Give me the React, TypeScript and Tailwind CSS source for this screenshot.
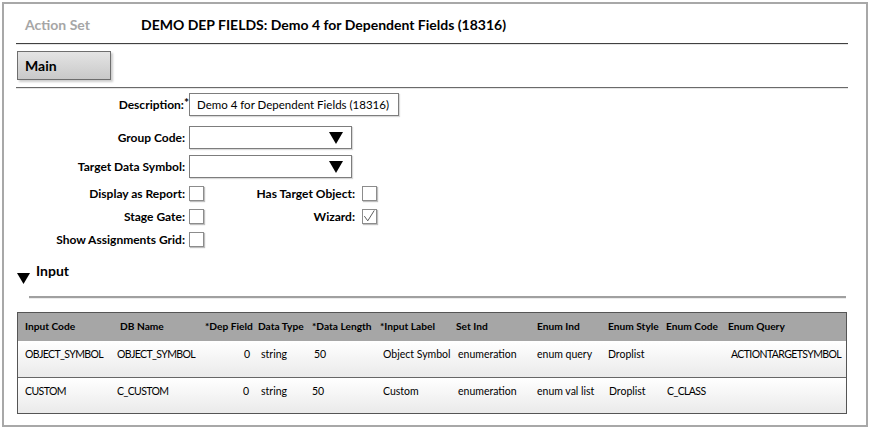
import React from "react";

const font = { fontFamily: "Lato, 'Open Sans', sans-serif" };

function Checkbox({ checked = false }: { checked?: boolean }) {
  return (
    <div className="relative w-[15px] h-[15px] border border-[#8c8c8c] bg-white shadow-[1px_1px_1px_rgba(0,0,0,0.25)]">
      {checked && (
        <svg viewBox="0 0 15 15" className="absolute inset-0 w-[13px] h-[13px]">
          <path d="M1.5 7 L5.5 12.5 L13 0.5" fill="none" stroke="#444" strokeWidth="1" />
        </svg>
      )}
    </div>
  );
}

function Select() {
  return (
    <div className="w-[163px] h-[23px] border border-[#7d7d7d] bg-white shadow-[1px_1px_1px_rgba(0,0,0,0.15)] flex items-center justify-end pr-[8px]">
      <svg width="14" height="12" viewBox="0 0 14 12">
        <polygon points="0,0 14,0 7,12" fill="#000" />
      </svg>
    </div>
  );
}

const cols = [
  { w: 97, h: "Input Code", hp: 7 },
  { w: 88, h: "DB Name", hp: 5 },
  { w: 53, h: "*Dep Field", hp: 2 },
  { w: 53, h: "Data Type", hp: 2 },
  { w: 68, h: "*Data Length", hp: 3 },
  { w: 76, h: "*Input Label", hp: 3 },
  { w: 80, h: "Set Ind", hp: 3 },
  { w: 72, h: "Enum Ind", hp: 4 },
  { w: 58, h: "Enum Style", hp: 3 },
  { w: 62, h: "Enum Code", hp: 3 },
  { w: 121, h: "Enum Query", hp: 3 },
];

type Cell = { t: string; p: number; right?: boolean; caps?: boolean };
const rows: Cell[][] = [
  [
    { t: "OBJECT_SYMBOL", p: 7, caps: true },
    { t: "OBJECT_SYMBOL", p: 2, caps: true },
    { t: "0", p: 6, right: true },
    { t: "string", p: 5 },
    { t: "50", p: 5 },
    { t: "Object Symbol", p: 6 },
    { t: "enumeration", p: 5 },
    { t: "enum query", p: 4 },
    { t: "Droplist", p: 3 },
    { t: "", p: 4 },
    { t: "ACTIONTARGETSYMBOL", p: 6, caps: true },
  ],
  [
    { t: "CUSTOM", p: 7, caps: true },
    { t: "C_CUSTOM", p: 2, caps: true },
    { t: "0", p: 7, right: true },
    { t: "string", p: 5 },
    { t: "50", p: 3 },
    { t: "Custom", p: 6 },
    { t: "enumeration", p: 5 },
    { t: "enum val list", p: 4 },
    { t: "Droplist", p: 4 },
    { t: "C_CLASS", p: 4, caps: true },
    { t: "", p: 6 },
  ],
];

export default function App() {
  return (
    <div className="w-[870px] h-[429px] bg-white p-[2px] text-black" style={font}>
      <div className="w-full h-[425px] border-2 border-[#a8a8a8]">
        {/* Header */}
        <div className="h-[39px] flex items-center pl-[21px] pt-[2px]">
          <div className="w-[116px] text-[14px] font-bold text-[#a6a6a6]">Action Set</div>
          <div className="text-[14px] font-bold">DEMO DEP FIELDS: Demo 4 for Dependent Fields (18316)</div>
        </div>
        <div className="ml-[12px] mr-[18px]">
          <div className="h-px bg-[#404040]" />
          <div className="h-px bg-[#e6e6e6]" />
        </div>
        {/* Tab */}
        <div className="mt-[6px] ml-[13px] w-[94px] h-[29px] border border-[#6e6e6e] bg-gradient-to-b from-[#e4e4e4] to-[#c9c9c9] shadow-[2px_2px_2px_rgba(0,0,0,0.2)] flex items-center pl-[7px] text-[14px] font-bold">
          Main
        </div>
        <div className="mt-[7px] ml-[12px] mr-[18px]">
          <div className="h-px bg-[#6a6a6a]" />
          <div className="h-px bg-[#e6e6e6]" />
        </div>
        {/* Form */}
        <div className="mt-[4px] flex flex-col text-[12px] font-bold">
          <div className="flex items-center h-[23px]">
            <div className="w-[181px] text-right">
              Description:<span className="inline-block -mr-[4px] relative -top-[2px] text-[12px]">*</span>
            </div>
            <div className="ml-[4px] w-[210px] h-[23px] border border-[#7d7d7d] bg-white shadow-[1px_1px_1px_rgba(0,0,0,0.15)] flex items-center pl-[7px] text-[11.5px] font-normal">
              Demo 4 for Dependent Fields (18316)
            </div>
          </div>
          <div className="flex items-center h-[23px] mt-[10px]">
            <div className="w-[181px] text-right">Group Code:</div>
            <div className="ml-[4px]">
              <Select />
            </div>
          </div>
          <div className="flex items-center h-[23px] mt-[6px]">
            <div className="w-[181px] text-right">Target Data Symbol:</div>
            <div className="ml-[4px]">
              <Select />
            </div>
          </div>
          <div className="flex items-center h-[15px] mt-[8px]">
            <div className="w-[181px] text-right">Display as Report:</div>
            <div className="ml-[4px]">
              <Checkbox />
            </div>
            <div className="w-[151px] text-right">Has Target Object:</div>
            <div className="ml-[7px]">
              <Checkbox />
            </div>
          </div>
          <div className="flex items-center h-[15px] mt-[8px]">
            <div className="w-[181px] text-right">Stage Gate:</div>
            <div className="ml-[4px]">
              <Checkbox />
            </div>
            <div className="w-[151px] text-right">Wizard:</div>
            <div className="ml-[7px]">
              <Checkbox checked />
            </div>
          </div>
          <div className="flex items-center h-[15px] mt-[8px]">
            <div className="w-[181px] text-right">Show Assignments Grid:</div>
            <div className="ml-[4px]">
              <Checkbox />
            </div>
          </div>
        </div>
        {/* Input section */}
        <div className="mt-[19px] ml-[13px] flex items-start h-[20px]">
          <svg width="13" height="11" viewBox="0 0 13 11" className="mt-[7px]">
            <polygon points="0,0 13,0 6.5,11" fill="#000" />
          </svg>
          <div className="ml-[6px] -mt-[3px] text-[14px] font-bold leading-[16px]">Input</div>
        </div>
        <div className="mt-[10px] ml-[25px] mr-[20px]">
          <div className="h-[2px] bg-[#a0a0a0]" />
          <div className="h-px bg-[#ececec]" />
        </div>
        {/* Table */}
        <div className="mt-[13px] ml-[13px] w-[830px] border border-[#555]">
          <div className="flex h-[28px] items-center bg-[#a6a6a6] text-[10.2px] font-bold">
            {cols.map((c, i) => (
              <div key={i} className="shrink-0 whitespace-nowrap" style={{ width: c.w, paddingLeft: c.hp }}>
                {c.h}
              </div>
            ))}
          </div>
          {rows.map((r, ri) => (
            <div
              key={ri}
              className={`flex h-[36px] items-start pt-[6px] text-[10.5px] bg-gradient-to-b from-white to-[#eaeaea] ${ri > 0 ? "border-t border-[#666]" : ""}`}
            >
              {r.map((c, i) => (
                <div
                  key={i}
                  className={`shrink-0 whitespace-nowrap ${c.right ? "text-right" : ""} ${c.caps ? "tracking-[-0.6px]" : ""}`}
                  style={{ width: cols[i].w, paddingLeft: c.right ? 0 : c.p, paddingRight: c.right ? c.p : 0 }}
                >
                  {c.t}
                </div>
              ))}
            </div>
          ))}
        </div>
      </div>
    </div>
  );
}
